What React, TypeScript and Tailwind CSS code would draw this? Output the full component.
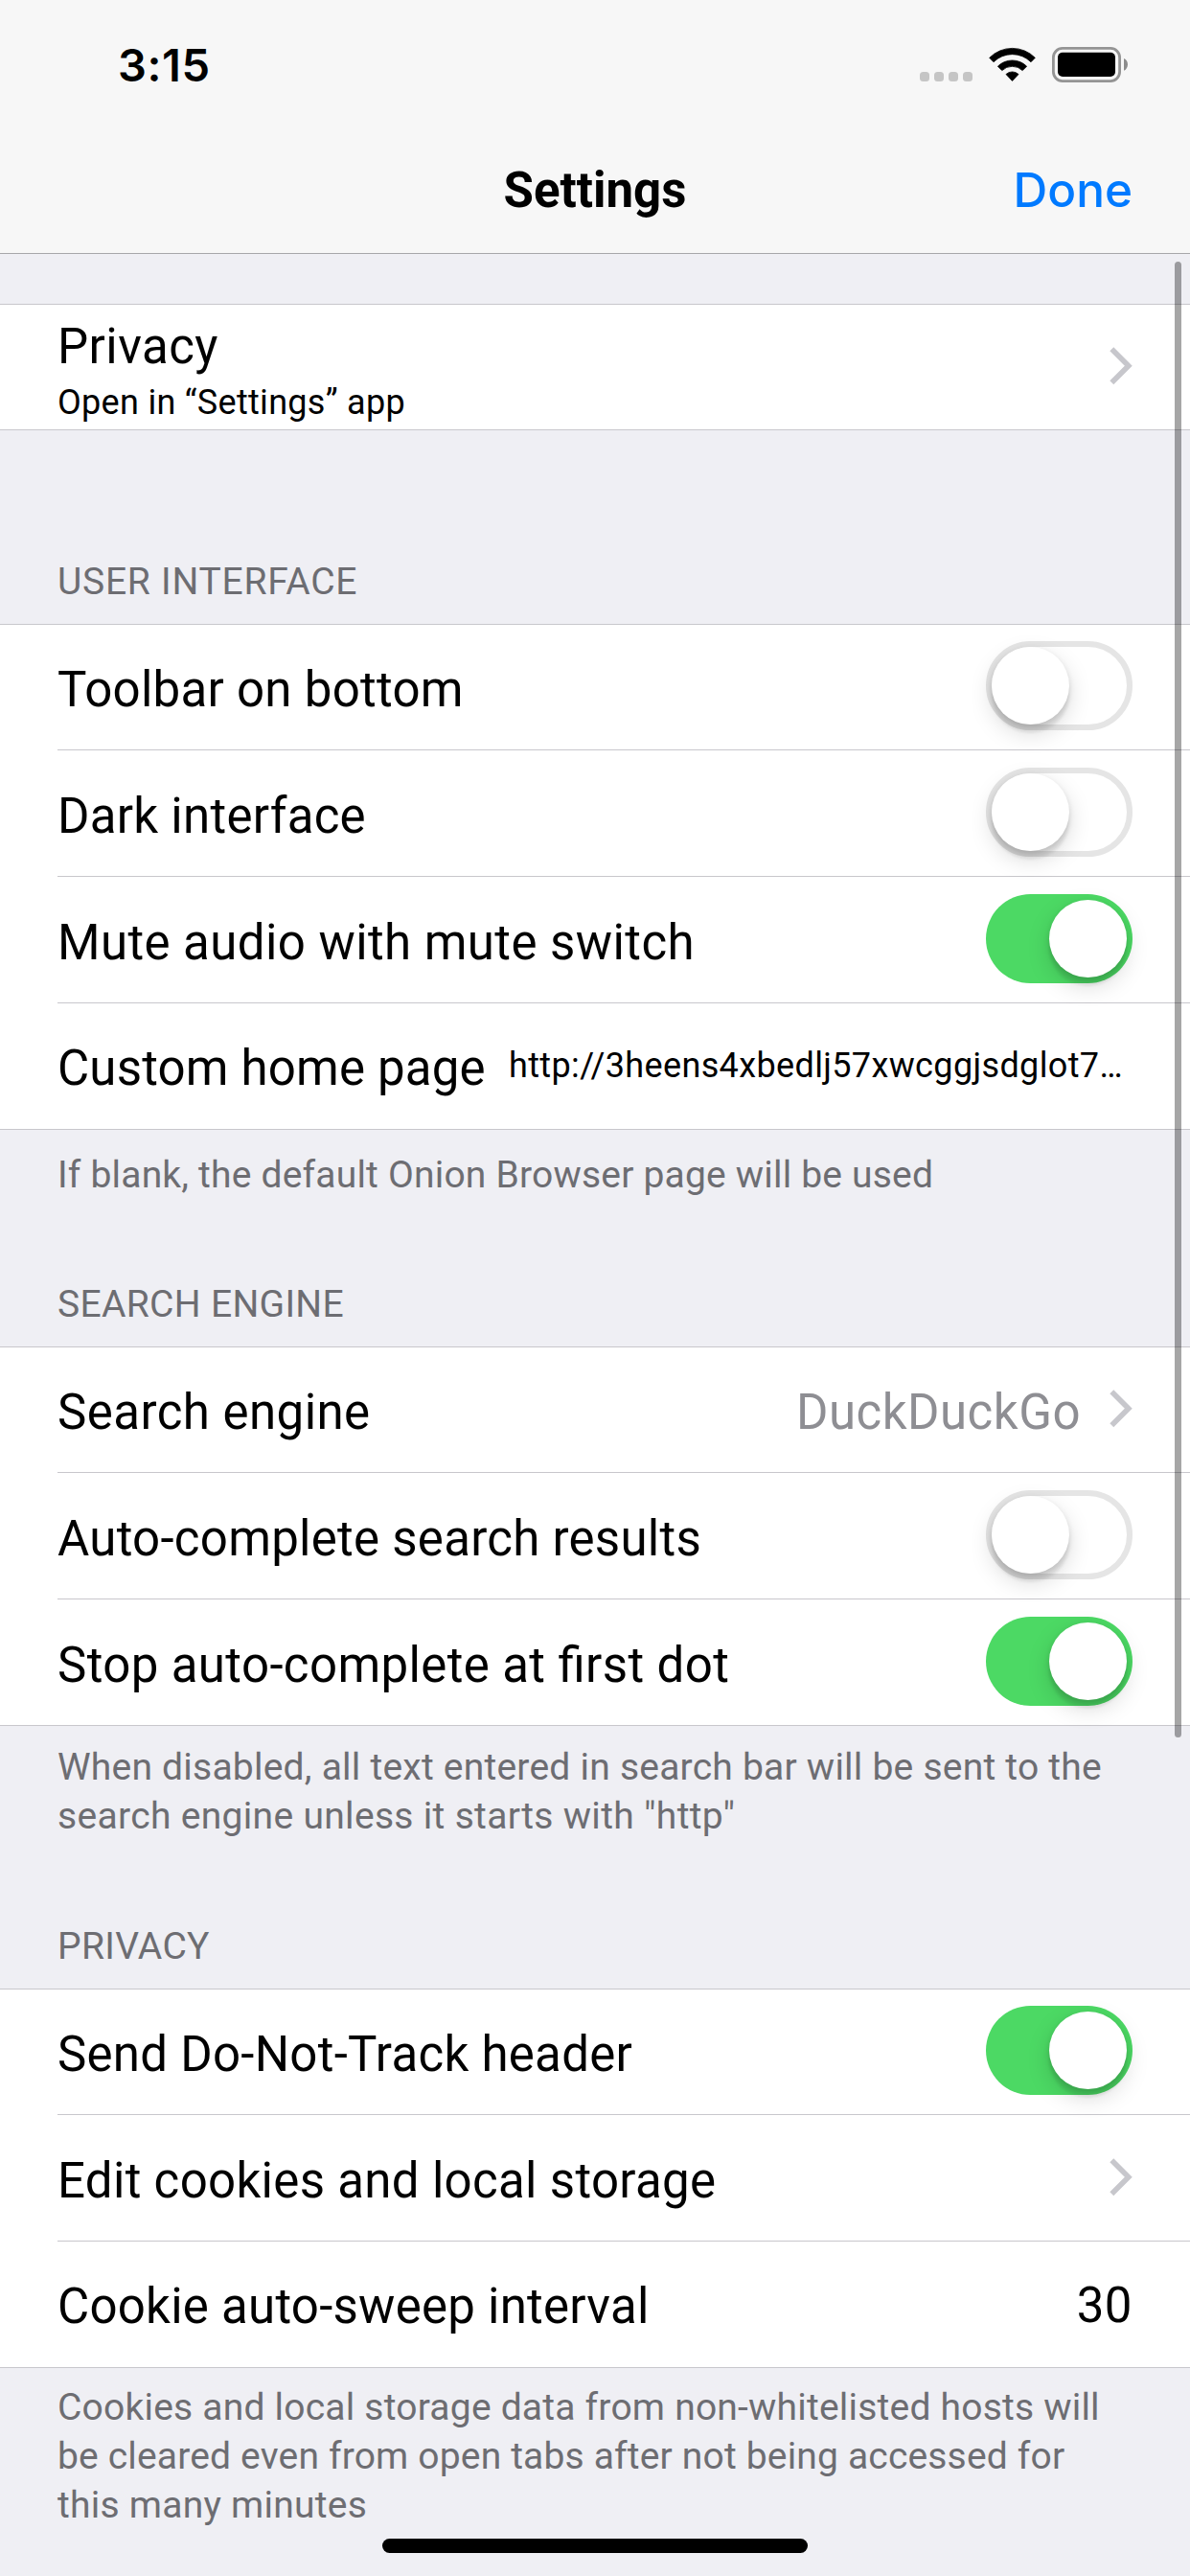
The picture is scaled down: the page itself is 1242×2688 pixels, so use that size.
import type { ReactNode } from 'react';

function WifiIcon() {
  return (
    <svg className="h-[36px] w-[49px]" viewBox="0 0 49 36" fill="#000" stroke="#000" strokeWidth="0.8" strokeLinejoin="round">
      <path d="M0.7 11.3 A33.5 33.5 0 0 1 48.3 11.3 L44 15.7 A27.6 27.6 0 0 0 5 15.7 Z" />
      <path d="M9.4 20.2 A21.5 21.5 0 0 1 39.6 20.2 L35.2 24.6 A15.4 15.4 0 0 0 13.8 24.6 Z" />
      <path d="M18 28.5 A9.5 9.5 0 0 1 31 28.5 L24.5 35.4 Z" />
    </svg>
  );
}

function BatteryIcon() {
  return (
    <svg className="h-[37px] w-[79px]" viewBox="0 0 79 37">
      <rect x="1.4" y="1.4" width="69.2" height="34.2" rx="9.5" fill="none" stroke="#949494" strokeWidth="2.8" />
      <rect x="6" y="5.7" width="60" height="25.3" rx="5" fill="#000" />
      <path d="M75 12 C80.3 13.8 80.3 22.7 75 24.7 Z" fill="#8c8c8c" />
    </svg>
  );
}

function Chevron() {
  return (
    <svg className="mt-[27px] h-[40px] w-[24px] shrink-0" viewBox="0 0 24 40">
      <path d="M2.3 2.2 L19.8 19.7 L2.3 37.2" fill="none" stroke="#c7c7cc" strokeWidth="5.6" />
    </svg>
  );
}

function Toggle({ on = false }: { on?: boolean }) {
  return (
    <span
      className={
        on
          ? 'flex h-[93px] w-[153px] shrink-0 justify-end rounded-full bg-[#4cd964] p-[6px]'
          : 'flex h-[93px] w-[153px] shrink-0 rounded-full border-[6px] border-[#e5e5e5] bg-white'
      }
    >
      <span className="size-[81px] rounded-full bg-white shadow-[0_9px_24px_rgba(0,0,0,0.15),0_9px_3px_rgba(0,0,0,0.06),0_3px_6px_rgba(0,0,0,0.12)]" />
    </span>
  );
}

type RowProps = { label: string; labelClass?: string; first?: boolean; children?: ReactNode };

function Row({ label, labelClass = 'mt-[21px] tracking-[0.27px]', first = false, children }: RowProps) {
  return (
    <div className={first ? 'h-[131px]' : 'h-[132px]'}>
      <div className={first ? 'h-px bg-[#c8c7cc]' : 'ml-[60px] h-px bg-[#c8c7cc]'} />
      <div className={first ? 'flex items-start pt-[17px] pr-[60px] pl-[60px]' : 'flex items-start pt-[18px] pr-[60px] pl-[60px]'}>
        <span className={`text-[51px] leading-[59px] whitespace-nowrap ${labelClass}`}>{label}</span>
        <div className="ml-auto flex min-w-0 items-start">{children}</div>
      </div>
    </div>
  );
}

function Group({ children }: { children: ReactNode }) {
  return <section className="border-b border-[#c8c7cc] bg-white">{children}</section>;
}

function Title({ children, spacing }: { children: ReactNode; spacing: string }) {
  return <h2 className={`mt-auto pb-[21px] text-[39px] leading-[46px] ${spacing}`}>{children}</h2>;
}

export default function App() {
  return (
    <div className="relative h-[2688px] w-[1242px] overflow-hidden bg-[#efeff4] font-['Roboto',sans-serif] text-black">
      <header className="h-[265px] border-b border-[#a7a7aa] bg-[#f7f7f7]">
        <div className="flex h-[132px] items-start pt-[49px] pr-[65px] pl-[123px]">
          <span className="-mt-[10px] font-['Inter',sans-serif] text-[47px] leading-[57px] font-semibold tracking-[0.6px]">3:15</span>
          <div className="mt-[26px] ml-auto flex gap-[5px]">
            <i className="size-[10px] rounded-[3.5px] bg-[#c5c5c5]" />
            <i className="size-[10px] rounded-[3.5px] bg-[#c5c5c5]" />
            <i className="size-[10px] rounded-[3.5px] bg-[#c5c5c5]" />
            <i className="size-[10px] rounded-[3.5px] bg-[#c5c5c5]" />
          </div>
          <div className="ml-[17px] flex gap-[17px]">
            <WifiIcon />
            <BatteryIcon />
          </div>
        </div>
        <div className="grid h-[132px] grid-cols-3 items-start px-[60px] pt-[36px] text-[51px] leading-[60px]">
          <span />
          <h1 className="pt-px text-center font-bold">Settings</h1>
          <button className="text-right font-['Inter',sans-serif] text-[49.5px] font-medium text-[#007aff]">Done</button>
        </div>
      </header>

      <main className="pt-[52px]">
        <section className="flex h-[132px] items-start border-y border-[#c8c7cc] bg-white px-[60px] pt-[14px]">
          <div className="grow">
            <p className="text-[51px] leading-[59px] tracking-[0.45px]">Privacy</p>
            <p className="mt-[8px] text-[36px] leading-[42px] tracking-[0.3px]">Open in “Settings” app</p>
          </div>
          <div className="mt-[3px]">
            <Chevron />
          </div>
        </section>

        <div className="flex h-[202px] flex-col px-[60px] text-[#6d6d72]">
          <Title spacing="tracking-[0.75px]">USER INTERFACE</Title>
        </div>

        <Group>
          <Row label="Toolbar on bottom" first>
            <Toggle />
          </Row>
          <Row label="Dark interface">
            <Toggle />
          </Row>
          <Row label="Mute audio with mute switch" labelClass="mt-[21px] tracking-[0.42px]">
            <Toggle on />
          </Row>
          <Row label="Custom home page" labelClass="mt-[20px] tracking-[0.17px]">
            <span className="mt-[26px] w-[651px] text-[36px] leading-[42px] tracking-[0.37px] whitespace-nowrap">
              http://3heens4xbedlj57xwcggjsdglot7…
            </span>
          </Row>
        </Group>

        <div className="flex h-[226px] flex-col px-[60px] text-[#6d6d72]">
          <p className="pt-[22px] text-[39px] leading-[51px] tracking-[0.2px]">If blank, the default Onion Browser page will be used</p>
          <Title spacing="tracking-[0.32px]">SEARCH ENGINE</Title>
        </div>

        <Group>
          <Row label="Search engine" labelClass="mt-[21px] tracking-[0.45px]" first>
            <span className="mt-[21px] mr-[30px] text-[51px] leading-[59px] tracking-[0.5px] text-[#8e8e93]">DuckDuckGo</span>
            <Chevron />
          </Row>
          <Row label="Auto-complete search results">
            <Toggle />
          </Row>
          <Row label="Stop auto-complete at first dot" labelClass="mt-[21px] tracking-[0.38px] [font-feature-settings:'liga']">
            <Toggle on />
          </Row>
        </Group>

        <div className="flex h-[274px] flex-col px-[60px] text-[#6d6d72]">
          <p className="pt-[18px] text-[39px] leading-[51px] whitespace-nowrap">
            <span className="tracking-[0.23px]">When disabled, all text entered in search bar will be sent to the</span>
            <br />
            <span className="tracking-[0.32px]">search engine unless it starts with "http"</span>
          </p>
          <Title spacing="tracking-[0.3px]">PRIVACY</Title>
        </div>

        <Group>
          <Row label="Send Do-Not-Track header" first>
            <Toggle on />
          </Row>
          <Row label="Edit cookies and local storage" labelClass="mt-[21px] tracking-[0.32px]">
            <Chevron />
          </Row>
          <Row label="Cookie auto-sweep interval" labelClass="mt-[20px] tracking-[0.25px]">
            <span className="mt-[19px] text-[51px] leading-[59px] tracking-[0.5px]">30</span>
          </Row>
        </Group>

        <p className="px-[60px] pt-[16px] text-[39px] leading-[51px] whitespace-nowrap text-[#6d6d72]">
          <span className="tracking-[0.21px]">Cookies and local storage data from non-whitelisted hosts will</span>
          <br />
          <span className="tracking-[0.17px]">be cleared even from open tabs after not being accessed for</span>
          <br />
          <span className="tracking-[0.25px]">this many minutes</span>
        </p>
      </main>

      <div className="absolute top-[273px] right-[9px] h-[1540px] w-[7px] rounded-full bg-black/35" />
      <div className="absolute bottom-[24px] left-[399px] h-[15px] w-[444px] rounded-full bg-black" />
    </div>
  );
}
